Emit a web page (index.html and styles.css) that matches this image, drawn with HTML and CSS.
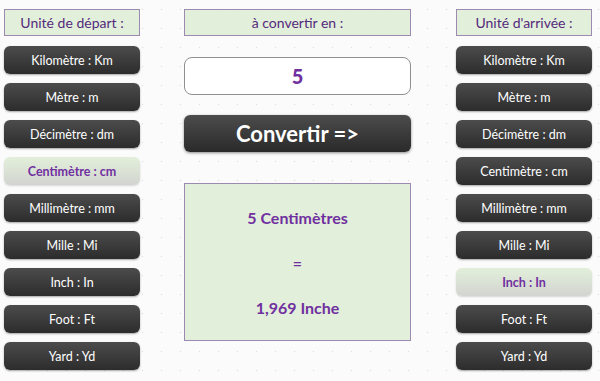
FILE: index.html
```html
<!DOCTYPE html>
<html lang="fr">
<head>
    <meta charset="UTF-8">
    <meta name="viewport" content="width=device-width, initial-scale=1.0">
    <title>Conversion d'unités</title>
    <link rel="stylesheet" href="styles.css">
</head>
<body>
    <div class="page">
        <div class="column side">
            <div class="title">Unité de départ :</div>
            <button class="unit">Kilomètre : Km</button>
            <button class="unit">Mètre : m</button>
            <button class="unit">Décimètre : dm</button>
            <button class="unit selected">Centimètre : cm</button>
            <button class="unit">Millimètre : mm</button>
            <button class="unit">Mille : Mi</button>
            <button class="unit">Inch : In</button>
            <button class="unit">Foot : Ft</button>
            <button class="unit">Yard : Yd</button>
        </div>

        <div class="column middle">
            <div class="title">à convertir en :</div>
            <input type="text" class="amount" value="5">
            <button class="convert">Convertir =&gt;</button>
            <div class="result">
                <p>5 Centimètres</p>
                <p>=</p>
                <p>1,969 Inche</p>
            </div>
        </div>

        <div class="column side">
            <div class="title">Unité d'arrivée :</div>
            <button class="unit">Kilomètre : Km</button>
            <button class="unit">Mètre : m</button>
            <button class="unit">Décimètre : dm</button>
            <button class="unit">Centimètre : cm</button>
            <button class="unit">Millimètre : mm</button>
            <button class="unit">Mille : Mi</button>
            <button class="unit selected">Inch : In</button>
            <button class="unit">Foot : Ft</button>
            <button class="unit">Yard : Yd</button>
        </div>
    </div>
</body>
</html>
```

FILE: styles.css
```css
body {
    margin: 0;
    font-family: Lato, "Open Sans", sans-serif;
    background-color: #fcfbfb;
    background-image: radial-gradient(#e6e1e1 0.6px, transparent 1.1px);
    background-size: 19px 19px;
    height: 381px;
    overflow: hidden;
}
.page {
    display: flex;
    gap: 44px;
    padding: 9px 0 0 4px;
}
.column {
    display: flex;
    flex-direction: column;
}
.side {
    width: 136px;
    gap: 9px;
}
.middle {
    width: 227px;
    margin-right: 1px;
}
.title {
    height: 27px;
    box-sizing: border-box;
    border: 1px solid #9c8ab0;
    background-color: #e2efda;
    color: #542a7c;
    font-size: 14px;
    display: flex;
    align-items: center;
    justify-content: center;
}
.side .title {
    margin-bottom: 1px;
}
.unit {
    height: 28px;
    border: none;
    border-radius: 6px;
    background: linear-gradient(#4c4c4c, #2c2c2c);
    color: #fff;
    font-family: inherit;
    font-size: 12.5px;
    box-shadow: 0 1px 2px rgba(0, 0, 0, 0.35);
    cursor: pointer;
}
.unit.selected {
    background: linear-gradient(#e2efda, #d2d4d0);
    color: #7030a0;
    font-weight: bold;
    box-shadow: 0 1px 2px rgba(0, 0, 0, 0.15);
}
.amount {
    margin-top: 21px;
    height: 38px;
    box-sizing: border-box;
    border: 1px solid #8f8f8f;
    border-radius: 8px;
    background-color: #fff;
    text-align: center;
    color: #7030a0;
    font-family: inherit;
    font-size: 20px;
    font-weight: 900;
}
.convert {
    margin-top: 20px;
    height: 37px;
    border: none;
    border-radius: 6px;
    background: linear-gradient(#4c4c4c, #2a2a2a);
    color: #fff;
    font-family: inherit;
    font-size: 22px;
    font-weight: bold;
    box-shadow: 0 1px 3px rgba(0, 0, 0, 0.45);
    cursor: pointer;
}
.result {
    margin-top: 31px;
    height: 158px;
    box-sizing: border-box;
    border: 1px solid #9c8ab0;
    background-color: #e2efda;
    display: flex;
    flex-direction: column;
    align-items: center;
    justify-content: center;
    gap: 24px;
    color: #7030a0;
    font-size: 16px;
    font-weight: bold;
}
.result p {
    margin: 0;
    line-height: 21px;
}
```
